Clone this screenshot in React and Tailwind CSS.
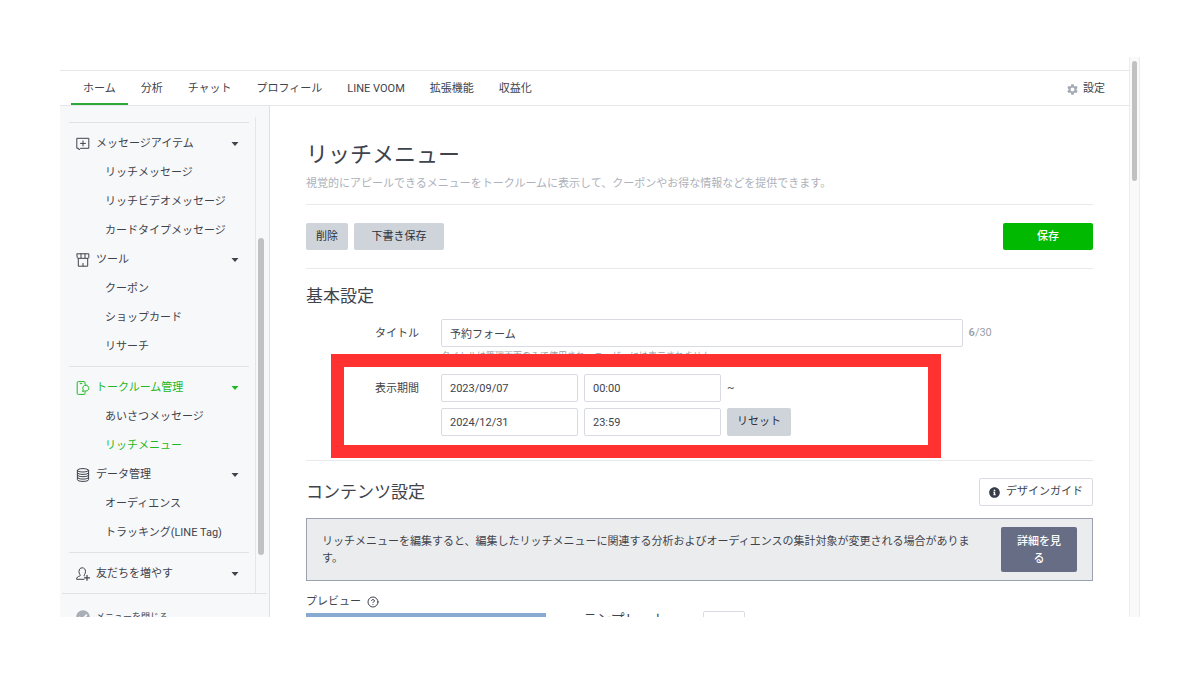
import { FaInfoCircle, FaCheckCircle } from 'react-icons/fa'
import { MdSettings } from 'react-icons/md'
import { CircleHelp } from 'lucide-react'

const NAV_ITEMS = ['ホーム', '分析', 'チャット', 'プロフィール', 'LINE VOOM', '拡張機能', '収益化']

const MENU_BLOCKS = [
  [
    {
      label: 'メッセージアイテム',
      icon: MessageIcon,
      children: ['リッチメッセージ', 'リッチビデオメッセージ', 'カードタイプメッセージ'],
    },
    { label: 'ツール', icon: ShopIcon, children: ['クーポン', 'ショップカード', 'リサーチ'] },
  ],
  [
    {
      label: 'トークルーム管理',
      icon: TalkRoomIcon,
      active: true,
      children: ['あいさつメッセージ', 'リッチメニュー'],
    },
    { label: 'データ管理', icon: DataIcon, children: ['オーディエンス', 'トラッキング(LINE Tag)'] },
  ],
  [{ label: '友だちを増やす', icon: FriendIcon, children: [] }],
]

const CURRENT_PAGE = 'リッチメニュー'

function Icon({ children }) {
  return (
    <svg
      viewBox="0 0 14 14"
      className="size-[14px] shrink-0"
      fill="none"
      stroke="currentColor"
      strokeWidth="1"
      strokeLinejoin="round"
      strokeLinecap="round"
      aria-hidden="true"
    >
      {children}
    </svg>
  )
}

function MessageIcon() {
  return (
    <Icon>
      <path d="M1.2 1.3h11.6v10H4.6L3 12.9l-.3-1.6H1.2z" />
      <path d="M7 3.9v5M4.5 6.4h5" />
    </Icon>
  )
}

function ShopIcon() {
  return (
    <Icon>
      <path d="M1.2.8h11.6v3.6c0 .6-.4.9-1 .9H2.2c-.6 0-1-.3-1-.9z" />
      <path d="M5 .8v4.300M9 .8v4.300M2.300 5.400v7.800h9.400V5.400M7 13v-2.600" />
    </Icon>
  )
}

function TalkRoomIcon() {
  return (
    <Icon>
      <path d="M9 3V1.600a1 1 0 0 0-1-1H2.200a1 1 0 0 0-1 1v10.800a1 1 0 0 0 1 1H8a1 1 0 0 0 1-1v-1.600" />
      <path d="M4.200 2.600h1.600" />
      <path d="M9.800 4.100a3 3 0 1 1-1.100 5.800l-2.100.6.6-1.800a3 3 0 0 1 2.600-4.600z" />
    </Icon>
  )
}

function DataIcon() {
  return (
    <Icon>
      <ellipse cx="7" cy="2.300" rx="5.600" ry="1.700" />
      <path d="M1.400 2.300v9.400c0 1 2.500 1.700 5.600 1.700s5.600-.7 5.600-1.700V2.300" />
      <path d="M1.400 4.700c0 1 2.500 1.700 5.600 1.700s5.600-.7 5.600-1.700M1.400 7c0 1 2.500 1.700 5.600 1.700s5.600-.7 5.600-1.700M1.400 9.400c0 1 2.500 1.700 5.600 1.700s5.600-.7 5.600-1.700" />
    </Icon>
  )
}

function FriendIcon() {
  return (
    <Icon>
      <path d="M8 12.300H.6c0-2.200 1.400-2.800 3.100-3.200.7-.2.7-.9.3-1.400A5 5 0 0 1 3 4.400C3 2.200 4.300.8 6.200.8s3.300 1.400 3.300 3.600a5 5 0 0 1-1.100 3.300c-.4.5-.4 1.200.3 1.400" />
      <path d="M11 8.300v4.900M8.500 10.800h5" strokeWidth="1.200" />
    </Icon>
  )
}

function Caret() {
  return (
    <svg viewBox="0 0 8 4" className="ml-auto h-1 w-2" fill="currentColor" aria-hidden="true">
      <path d="M.5 0h7L4 4z" />
    </svg>
  )
}

function GlobalNav() {
  return (
    <header className="mt-[13px] flex h-9 shrink-0 items-stretch border-y border-[#e4e6ea] pr-6 pl-[11px]">
      <nav className="flex gap-px">
        {NAV_ITEMS.map((item, i) => (
          <a
            key={item}
            href="#"
            className={`flex items-center border-b-2 px-3 pt-1 whitespace-nowrap ${
              i === 0 ? 'border-[#2fa83a]' : 'border-transparent'
            }`}
          >
            {item}
          </a>
        ))}
      </nav>
      <a href="#" className="ml-auto flex items-center gap-1 pt-0.5">
        <MdSettings className="size-[13px] text-[#a3a9b3]" />
        設定
      </a>
    </header>
  )
}

function MenuSection({ section }) {
  const SectionIcon = section.icon
  return (
    <li>
      <button
        className={`flex h-[29px] w-full items-center gap-1.5 pt-0.5 pr-[10px] pl-[7px] ${
          section.active ? 'text-[#1db924]' : ''
        }`}
      >
        <SectionIcon />
        {section.label}
        <Caret />
      </button>
      <ul>
        {section.children.map((child) => (
          <li key={child}>
            <a
              href="#"
              className={`flex h-[29px] items-center pt-0.5 pl-9 whitespace-nowrap ${
                child === CURRENT_PAGE ? 'text-[#1db924]' : ''
              }`}
            >
              {child}
            </a>
          </li>
        ))}
      </ul>
    </li>
  )
}

function Sidebar() {
  return (
    <aside className="w-[210px] shrink-0 border-r border-[#dde1e6] bg-[#f7f8fa]">
      <div className="mx-0.5 flex border-b border-[#dfe2e6]">
        <nav className="flex-1 pt-4 pr-1.5 pl-[7px]">
          {MENU_BLOCKS.map((block) => (
            <ul key={block[0].label} className="border-t border-[#dfe2e6] pt-[5px] pb-1.5">
              {block.map((section) => (
                <MenuSection key={section.label} section={section} />
              ))}
            </ul>
          ))}
        </nav>
        <div className="mt-[11px] flex w-3 border-l border-[#e4e6e9] pt-[121px] pl-0.5">
          <div className="h-[317px] w-1.5 rounded-full bg-[#c1c1c1]" />
        </div>
      </div>
      <button className="mt-[15px] flex items-center gap-1.5 pl-4 text-[9px] leading-4">
        <FaCheckCircle className="size-[14px] text-[#a9aeb6]" />
        メニューを閉じる
      </button>
    </aside>
  )
}

function GrayButton({ className, children }) {
  return (
    <button className={`rounded-xs bg-[#cfd4da] text-[#2b2f38] ${className}`}>{children}</button>
  )
}

function TextField({ className, ...props }) {
  return (
    <input
      type="text"
      className={`h-7 rounded-xs border border-[#d8dbe2] bg-white px-2 ${className}`}
      {...props}
    />
  )
}

function BasicSettings() {
  return (
    <section className="border-b border-[#e8e9eb] pt-[15px] pb-6">
      <h2 className="text-[17px] leading-6">基本設定</h2>

      <div className="mt-[11px] flex gap-[22px]">
        <label htmlFor="title" className="w-[113px] shrink-0 text-right leading-[29px]">
          タイトル
        </label>
        <div className="flex-1">
          <div className="flex items-center gap-1.5">
            <TextField id="title" defaultValue="予約フォーム" className="w-4/5" />
            <span className="text-[#9a9fab]">
              <b className="font-semibold">6</b>/30
            </span>
          </div>
          <p className="mt-0.5 text-[9px] leading-[14px] text-[#9a9fab]">
            タイトルは管理画面のみで使用され、ユーザーには表示されません。
          </p>
        </div>
      </div>

      <div role="group" aria-labelledby="period" className="relative mt-[11px] flex gap-[22px]">
        <span id="period" className="w-[113px] shrink-0 text-right leading-[30px]">
          表示期間
        </span>
        <div className="space-y-1.5">
          <div className="flex items-center gap-1.5">
            <TextField aria-label="開始日" defaultValue="2023/09/07" className="w-[137px]" />
            <TextField aria-label="開始時刻" defaultValue="00:00" className="w-[137px]" />
            <span>~</span>
          </div>
          <div className="flex items-center gap-1.5">
            <TextField aria-label="終了日" defaultValue="2024/12/31" className="w-[137px]" />
            <TextField aria-label="終了時刻" defaultValue="23:59" className="w-[137px]" />
            <GrayButton className="h-7 w-16">リセット</GrayButton>
          </div>
        </div>
        {/* highlight frame around the display period */}
        <div className="pointer-events-none absolute -top-5 right-[152px] -bottom-[22px] left-[25px] border-[13px] border-[#ff3131]" />
      </div>
    </section>
  )
}

function ContentSettings() {
  return (
    <section className="pt-[17px]">
      <div className="flex items-center justify-between">
        <h2 className="text-[17px] leading-6">コンテンツ設定</h2>
        <button className="flex h-7 items-center gap-1.5 rounded-xs border border-[#d8dbe2] px-[9px]">
          <FaInfoCircle className="size-[11px] text-[#363c48]" />
          デザインガイド
        </button>
      </div>

      <div className="mt-3 flex gap-5 border border-[#9ba1b0] bg-[#ebecee] px-[15px] py-2">
        <p className="flex-1 pt-1.5 leading-[17px]">
          リッチメニューを編集すると、編集したリッチメニューに関連する分析およびオーディエンスの集計対象が変更される場合があります。
        </p>
        <button className="h-[45px] w-[76px] shrink-0 rounded-xs bg-[#676d84] px-3 leading-[17px] font-medium text-white">
          詳細を見る
        </button>
      </div>

      <div className="mt-[13px] flex gap-[37px]">
        <div className="w-60">
          <h3 className="flex items-center gap-1.5 leading-4">
            プレビュー
            <CircleHelp className="size-3" strokeWidth={2} />
          </h3>
          <div className="mt-[3px] h-40 bg-[#88a9d0]" />
        </div>
        <div className="flex items-start gap-9 pt-[17px]">
          <h3 className="text-[14px] leading-4">テンプレート</h3>
          <button
            aria-label="テンプレートを選択"
            className="h-7 w-[42px] rounded-xs border border-[#d8dbe2]"
          />
        </div>
      </div>
    </section>
  )
}

export default function App() {
  return (
    <div className="h-screen bg-white px-[60px] pt-[57px] pb-[58px] font-[Roboto,'Noto_Sans_CJK_JP',sans-serif] text-[11px] leading-4 text-[#3e434c]">
      <div className="flex h-full overflow-hidden" lang="ja">
        <div className="flex min-w-0 flex-1 flex-col">
          <GlobalNav />
          <div className="flex min-h-0 flex-1">
            <Sidebar />
            <main className="min-w-0 flex-1 px-9 pt-[34px]">
              <div className="border-b border-[#e8e9eb] pb-3">
                <h1 className="text-[22px] leading-[30px]">リッチメニュー</h1>
                <p className="mt-1.5 text-[#adb1ba]">
                  視覚的にアピールできるメニューをトークルームに表示して、クーポンやお得な情報などを提供できます。
                </p>
              </div>
              <div className="flex gap-1.5 border-b border-[#e8e9eb] py-[18px]">
                <GrayButton className="h-[27px] w-[42px]">削除</GrayButton>
                <GrayButton className="h-[27px] w-[90px]">下書き保存</GrayButton>
                <button className="ml-auto h-[27px] w-[90px] rounded-xs bg-[#00b900] font-medium text-white">
                  保存
                </button>
              </div>
              <BasicSettings />
              <ContentSettings />
            </main>
          </div>
        </div>
        <div className="w-[11px] shrink-0 border-x border-[#ececec] bg-[#fafafa] px-0.5 pt-1">
          <div className="h-[120px] rounded-full bg-[#c1c1c1]" />
        </div>
      </div>
    </div>
  )
}
